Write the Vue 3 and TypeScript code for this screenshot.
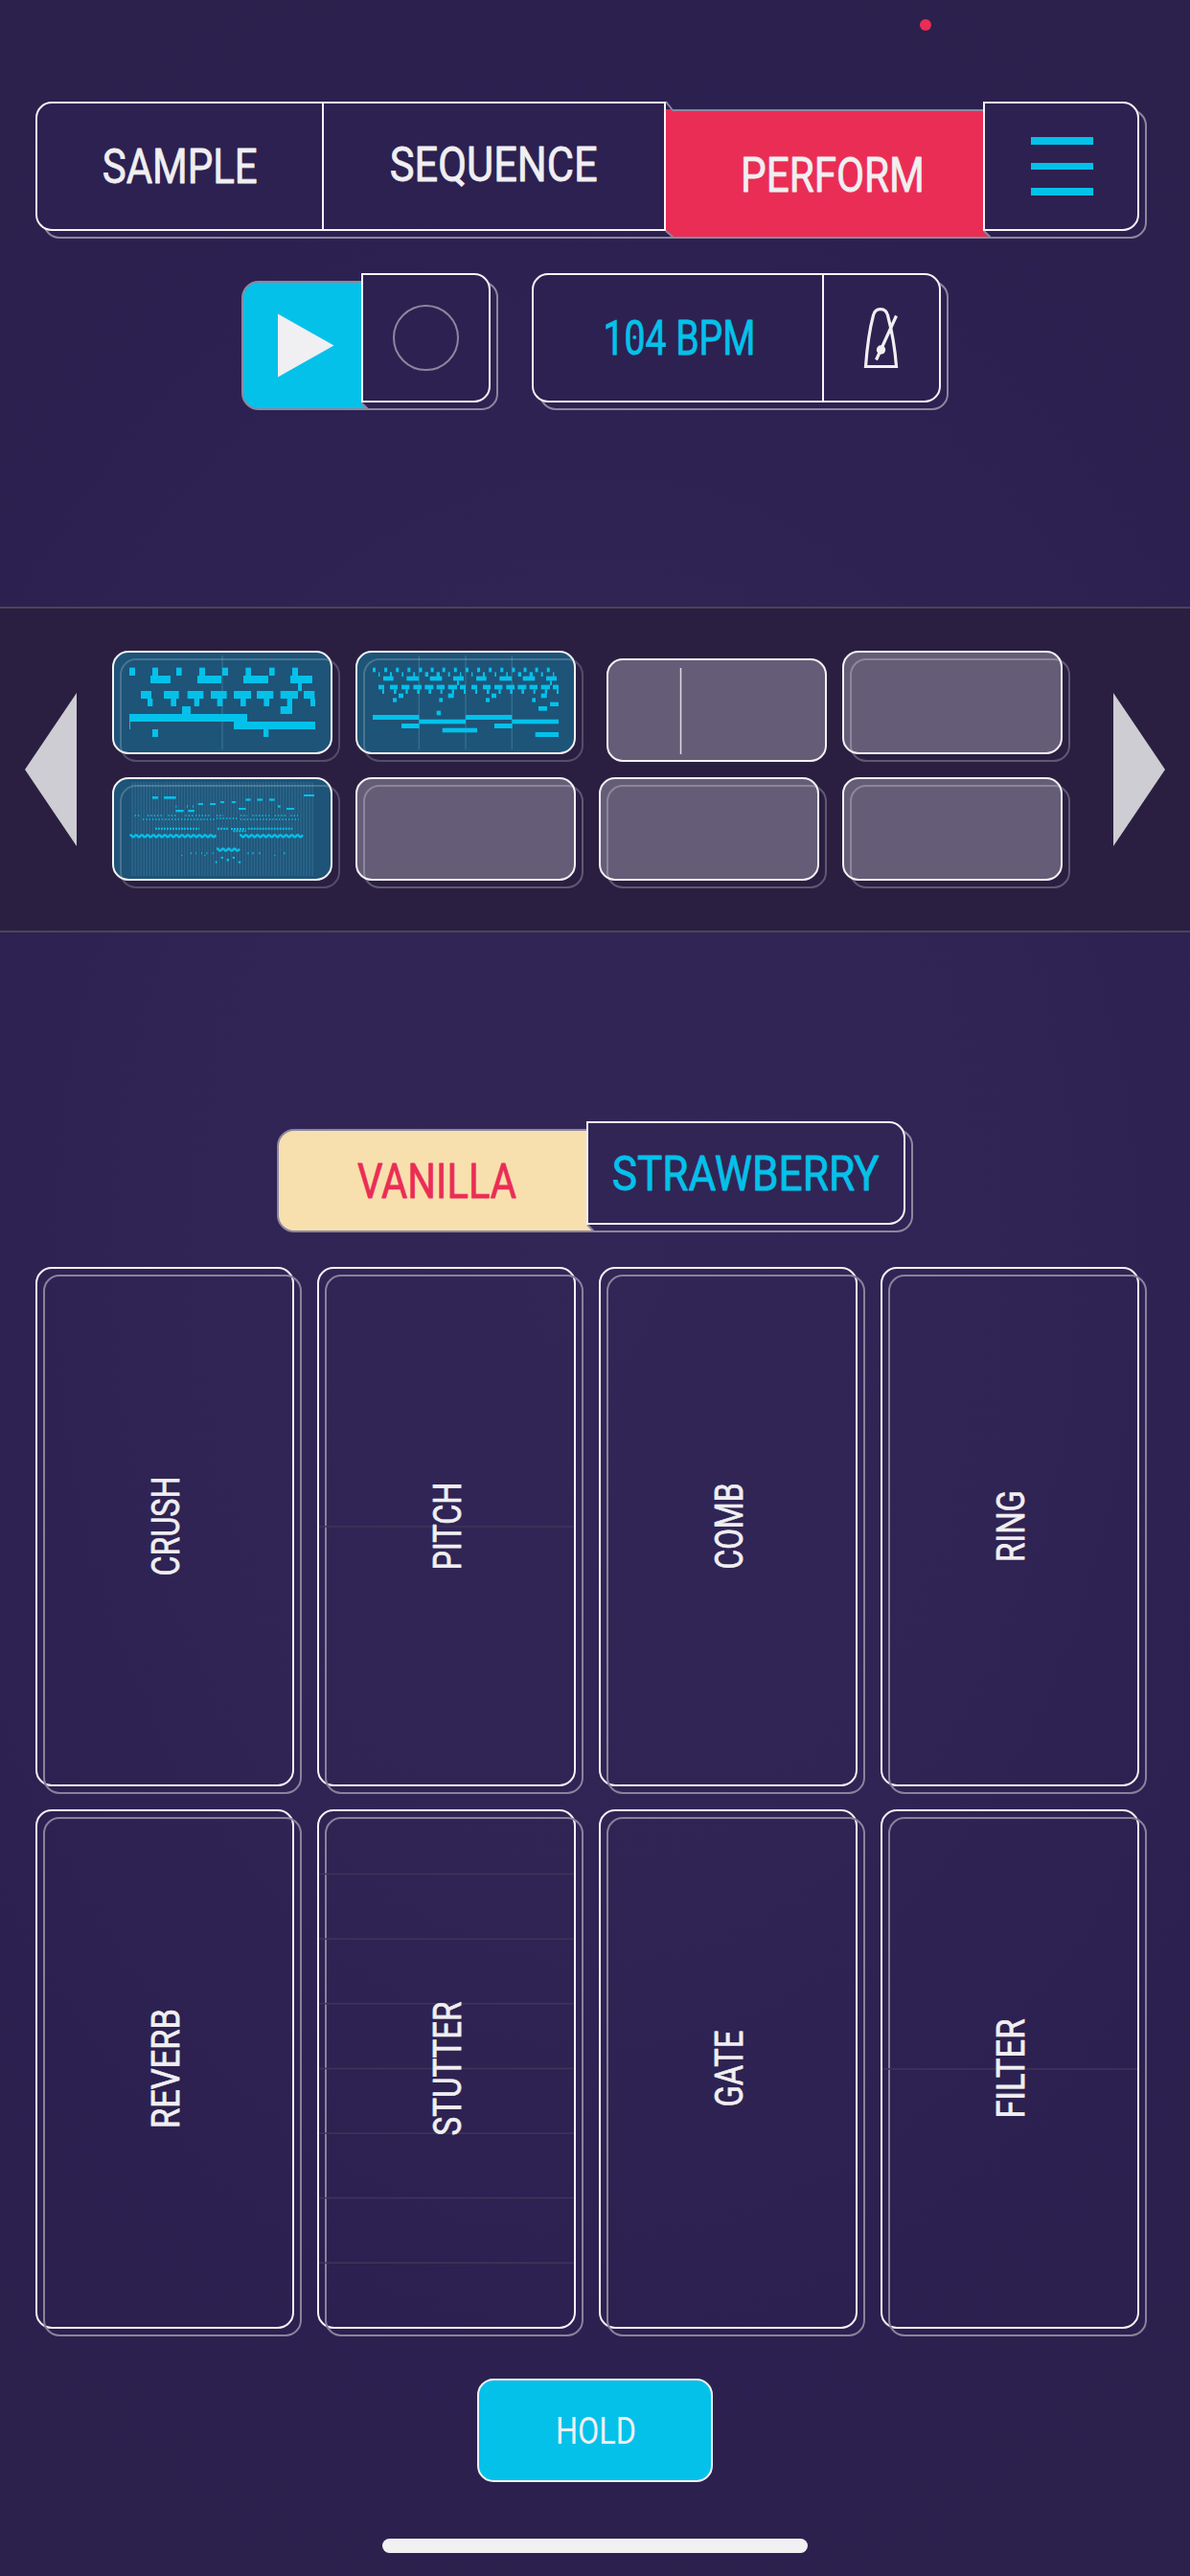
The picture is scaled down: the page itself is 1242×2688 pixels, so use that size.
<script setup lang="ts">
type Note = [x: number, y: number, w: number, h: number]

interface Clip {
  id: number
  kind: 'notes' | 'empty' | 'playing'
  box?: string
  bars?: number[]
  notes?: Note[]
  dense?: boolean
}

interface Pad {
  name: string
  length: number
  guides: number[]
}

const row = (y: number, h: number, cells: [number, number][]): Note[] =>
  cells.map(([x, w]) => [x, y, w, h])

const beatNotes: Note[] = [
  ...row(110, 25, [[105, 18], [177, 18], [252, 17], [324, 18], [396, 18], [469, 17], [543, 17], [615, 18]]),
  ...row(135, 24, [[171, 63], [318, 75], [462, 78], [609, 69]]),
  ...row(159, 24, [[633, 12]]),
  ...row(183, 24, [[141, 33], [213, 47], [287, 50], [360, 50], [432, 54], [504, 52], [578, 55], [651, 34]]),
  ...row(207, 24, [[162, 16], [235, 17], [308, 16], [380, 17], [453, 17], [526, 17], [599, 16], [672, 15]]),
  ...row(231, 24, [[270, 27], [578, 37]]),
  ...row(255, 24, [[105, 369]]),
  ...row(279, 24, [[105, 3], [432, 255]]),
  ...row(303, 24, [[177, 18], [525, 16]]),
]

const repeat = (cells: [number, number][]): [number, number][] => [
  ...cells,
  ...cells.map(([x, w]): [number, number] => [x + 291, w]),
]

const grooveNotes: Note[] = [
  ...row(110, 14, Array.from({ length: 16 }, (_, k): [number, number] => [87 + k * 36.35, 9])),
  ...row(124, 14, repeat([[105, 4], [141, 6], [178, 5], [214, 5], [251, 10], [287, 10], [323, 6], [360, 4]])),
  ...row(137, 14, repeat([[120, 32], [193, 38], [266, 38], [339, 33]])),
  ...row(151, 14, repeat([[351, 6]])),
  ...row(164, 14, repeat([[105, 18], [141, 24], [177, 25], [214, 26], [250, 27], [287, 25], [323, 28], [360, 18]])),
  ...row(178, 14, repeat([[117, 6], [153, 8], [190, 7], [226, 8], [262, 8], [299, 6], [335, 7], [372, 6]])),
  ...row(191, 14, repeat([[168, 15], [323, 18]])),
  ...row(205, 13, repeat([[150, 12], [295, 11]])),
  ...row(218, 13, [[642, 27]]),
  ...row(231, 14, [[606, 27]]),
  ...row(245, 14, [[287, 13]]),
  ...row(258, 15, [[87, 145], [378, 145]]),
  ...row(272, 14, [[232, 146], [523, 146]]),
  ...row(285, 15, repeat([[177, 56]])),
  ...row(299, 14, [[305, 109]]),
  ...row(312, 15, [[596, 73]]),
]

const songNotes: Note[] = [
  ...row(507, 6, [[651, 33]]),
  ...row(513, 8, [[177, 18], [213, 38]]),
  ...row(520, 7, [[469, 16], [505, 17], [543, 17]]),
  ...row(528, 6, [[390, 12], [426, 12]]),
  ...row(534, 6, [[320, 16], [357, 18]]),
  ...row(541, 7, [[570, 8], [285, 3], [303, 3], [250, 3]]),
  ...row(549, 6, [[447, 23], [597, 24]]),
  ...row(555, 7, [[250, 25], [289, 20]]),
  ...row(688, 6, [[297, 3], [312, 3], [330, 3], [346, 3], [365, 3], [475, 4], [490, 4], [511, 4], [588, 4]]),
  ...row(696, 3, [[267, 4], [339, 4], [558, 4]]),
  ...row(702, 6, [[392, 7], [428, 7]]),
  ...row(708, 8, [[410, 7]]),
  ...row(716, 6, [[374, 6], [446, 8]]),
]

// Arpeggio line: alternating high and low steps between two x positions.
const zigzag = (from: number, to: number, y: number): string => {
  let d = `M${from} ${y}`
  for (let x = from; x + 18 <= to + 2; x += 18.1) {
    d += ` h4 l5 6 h4 l5 -6`
  }
  return d
}

const clips: Clip[] = [
  { id: 1, kind: 'notes', box: '51 57 690 324', bars: [396], notes: beatNotes },
  { id: 2, kind: 'notes', box: '33 57 690 324', bars: [232, 378, 523], notes: grooveNotes },
  { id: 3, kind: 'playing' },
  { id: 4, kind: 'empty' },
  { id: 5, kind: 'notes', box: '51 453 690 324', notes: songNotes, dense: true },
  { id: 6, kind: 'empty' },
  { id: 7, kind: 'empty' },
  { id: 8, kind: 'empty' },
]

const pads: Pad[] = [
  { name: 'CRUSH', length: 104, guides: [] },
  { name: 'PITCH', length: 92, guides: [271] },
  { name: 'COMB', length: 90, guides: [] },
  { name: 'RING', length: 75, guides: [] },
  { name: 'REVERB', length: 125, guides: [] },
  { name: 'STUTTER', length: 140, guides: [1, 2, 3, 4, 5, 6, 7].map((n) => n * 67.6) },
  { name: 'GATE', length: 80, guides: [] },
  { name: 'FILTER', length: 104, guides: [271] },
]
</script>

<template>
  <main class="screen">
    <header class="status"><i class="rec-dot"></i></header>

    <nav class="group tabs">
      <i class="shadow"></i>
      <button class="seg first tab-sample">
        <svg class="label"><text x="50.4%" y="85" textLength="162" lengthAdjust="spacingAndGlyphs">SAMPLE</text></svg>
      </button>
      <button class="seg tab-sequence">
        <svg class="label"><text x="50.2%" y="82.5" textLength="217" lengthAdjust="spacingAndGlyphs">SEQUENCE</text></svg>
      </button>
      <button class="pressed tab-perform">
        <svg class="plate" width="340" height="143">
          <path d="M0 8H332V135L340 143H8L0 135Z" fill="#ea2d55" />
          <path class="edge" d="M0 0L7 9H332M0 135L8 142H340M332 135L339 142" />
        </svg>
        <svg class="label"><text x="174" y="93.5" textLength="192" lengthAdjust="spacingAndGlyphs">PERFORM</text></svg>
      </button>
      <button class="seg last tab-menu" aria-label="Menu">
        <i class="bar"></i><i class="bar"></i><i class="bar"></i>
      </button>
    </nav>

    <section class="transport">
      <div class="group deck">
        <i class="shadow"></i>
        <button class="pressed deck-play" aria-label="Play">
          <svg class="plate" width="133" height="143">
            <path d="M125 9H18A17 17 0 0 0 1 26V125A17 17 0 0 0 18 142H132L125 135Z" fill="#04c1ea" />
            <path class="edge" d="M125 9H18A17 17 0 0 0 1 26V125A17 17 0 0 0 18 142H133M125 135L132 142" />
            <path d="M38 42.5L96.5 75.5L38 108.5Z" fill="#f0eff1" />
          </svg>
        </button>
        <button class="seg last deck-record" aria-label="Record"><i class="ring"></i></button>
      </div>
      <div class="group tempo">
        <i class="shadow"></i>
        <button class="seg first tempo-value">
          <svg class="label cyan">
            <text x="153" y="84.5" textLength="159" lengthAdjust="spacingAndGlyphs">104 BPM</text>
            <circle cx="106.3" cy="67" r="2" />
          </svg>
        </button>
        <button class="seg last tempo-click" aria-label="Metronome">
          <svg width="40" height="70" viewBox="0 0 40 70" fill="none" stroke="#f0eff1" stroke-width="3.2">
            <path d="M3.5 64.500C5 44 8 24 11.500 11C13.500 2.500 24.500 2.500 26.500 11C30 24 34 44 35.500 64.500Z" />
            <path d="M14.500 57.500L35.500 11.500" />
            <circle cx="19.500" cy="47" r="4.700" fill="#f0eff1" stroke="none" />
          </svg>
        </button>
      </div>
    </section>

    <section class="band">
      <svg class="arrow" width="54" height="160"><path d="M54 0V160L0 80Z" /></svg>
      <div class="clips">
        <div v-for="clip in clips" :key="clip.id" class="clip" :class="clip.kind">
          <svg v-if="clip.kind === 'notes'" class="roll" :viewBox="clip.box" preserveAspectRatio="none">
            <template v-if="clip.dense">
              <path class="strips" d="M112 615H683" />
              <path class="ticks" d="M122 573H138M162 573H213M226 573H250M280 573H305M312 573H360M378 573H400M453 573H475M490 573H550M560 573H600M610 573H633" />
              <path class="ticks" d="M147 585H375M378 582H445M453 585H635" />
              <path class="ticks tight" d="M186 614H324M381 614H415M423 615H470M476 614H616M430 622H470" />
              <path class="zig" :d="zigzag(106, 376, 634)" />
              <path class="zig" :d="zigzag(450, 650, 634)" />
              <path class="zig" :d="zigzag(378, 450, 677)" />
            </template>
            <path v-for="b in clip.bars" :key="'b' + b" class="barline" :d="`M${b} 72V366`" />
            <rect v-for="(n, i) in clip.notes" :key="i" :x="n[0]" :y="n[1]" :width="n[2]" :height="n[3]" />
          </svg>
          <svg v-else-if="clip.kind === 'playing'" class="roll"><path class="playhead" d="M77.5 10V100" /></svg>
        </div>
      </div>
      <svg class="arrow" width="54" height="160"><path d="M0 0V160L54 80Z" /></svg>
    </section>

    <section class="group flavour">
      <i class="shadow"></i>
      <button class="pressed flavour-a">
        <svg class="plate" width="332" height="116">
          <path d="M324 9H18A17 17 0 0 0 1 26V98A17 17 0 0 0 18 115H331L324 108Z" fill="#f7e0ae" />
          <path class="edge" d="M324 9H18A17 17 0 0 0 1 26V98A17 17 0 0 0 18 115H332M324 108L331 115" />
        </svg>
        <svg class="label red"><text x="167" y="79.5" textLength="166" lengthAdjust="spacingAndGlyphs">VANILLA</text></svg>
      </button>
      <button class="seg last flavour-b">
        <svg class="label cyan"><text x="50.2%" y="71.5" textLength="279" lengthAdjust="spacingAndGlyphs">STRAWBERRY</text></svg>
      </button>
    </section>

    <section class="pads">
      <button v-for="pad in pads" :key="pad.name" class="pad">
        <svg width="270" height="542">
          <path v-for="g in pad.guides" :key="g" class="guide" :d="`M2 ${g}H268`" />
          <text transform="translate(149.5 270.5) rotate(-90)" :textLength="pad.length" lengthAdjust="spacingAndGlyphs">{{ pad.name }}</text>
        </svg>
      </button>
    </section>

    <button class="hold">
      <svg><text x="50.4%" y="68" textLength="84" lengthAdjust="spacingAndGlyphs">HOLD</text></svg>
    </button>
    <i class="home"></i>
  </main>
</template>

<style>
body {
  margin: 0;
  background: #2c2050;
}
</style>

<style scoped>
* {
  box-sizing: border-box;
}

.screen {
  width: 1242px;
  height: 2688px;
  overflow: hidden;
  display: flex;
  flex-direction: column;
  align-items: center;
  background: radial-gradient(ellipse 1000px 1450px at 50% 49%, #322657 0%, #302454 45%, #2c2050 80%, #2c204d 100%);
  font-family: Roboto, "Liberation Sans", sans-serif;
}

button {
  appearance: none;
  margin: 0;
  padding: 0;
  border: 0;
  background: none;
  font: inherit;
}

svg {
  display: block;
  overflow: visible;
}

text {
  font-size: 50.5px;
  text-anchor: middle;
  fill: #f0eff1;
  stroke: #f0eff1;
  stroke-width: 0.8px;
  stroke-linejoin: round;
}

.cyan text {
  fill: #04c1ea;
  stroke: #04c1ea;
}

.cyan circle {
  fill: #04c1ea;
}

.red text {
  fill: #ea2d55;
  stroke: #ea2d55;
}

.status {
  width: 100%;
  height: 106px;
  padding: 20px 270px 0 0;
  display: flex;
  justify-content: flex-end;
}

.rec-dot {
  width: 12px;
  height: 12px;
  border-radius: 50%;
  background: #ea2d55;
}

.group {
  position: relative;
  display: flex;
  height: 135px;
  flex: none;
}

.shadow {
  position: absolute;
  inset: 8px -8px -8px 8px;
  border: 2px solid #8d869f;
  border-radius: 17px;
}

.seg {
  position: relative;
  z-index: 1;
  display: flex;
  align-items: flex-start;
  border: 2px solid #f5f4f6;
  border-right-width: 0;
  background: #2d2151;
}

.first {
  border-radius: 17px 0 0 17px;
}

.last {
  border-right-width: 2px;
  border-radius: 0 17px 17px 0;
}

.label {
  width: 100%;
  height: 100%;
}

.seg .label {
  margin: -2px 0 0 -1px;
  height: 131px;
}

.pressed {
  position: relative;
}

.pressed .label {
  position: relative;
}

.plate {
  position: absolute;
  top: 0;
  left: 0;
}

.edge {
  fill: none;
  stroke: #8d869f;
  stroke-width: 2;
}

.tabs {
  width: 1152px;
  margin-right: 16px;
}

.tab-sample {
  width: 299px;
}

.tab-sequence {
  width: 359px;
  border-right-width: 2px;
}

.tab-perform {
  width: 331px;
}

.tab-menu {
  width: 163px;
  padding-left: 1px;
  flex-direction: column;
  align-items: center;
  justify-content: center;
  gap: 19px;
}

.bar {
  width: 65px;
  height: 7.5px;
  background: #04c1ea;
}

.transport {
  display: flex;
  gap: 43px;
  margin: 44px 8px 0 0;
  height: 135px;
}

.deck-play {
  width: 125px;
}

.deck-record {
  width: 135px;
  align-items: center;
  justify-content: center;
}

.ring {
  width: 69px;
  height: 69px;
  border: 2px solid #8d869f;
  border-radius: 50%;
}

.tempo-value {
  width: 303px;
}

.tempo-click {
  width: 124px;
  align-items: center;
  justify-content: center;
}

.band {
  width: 100%;
  height: 340px;
  margin-top: 213px;
  padding: 44px 26px 0;
  display: flex;
  justify-content: space-between;
  border: solid #4a4556;
  border-width: 2px 0;
  background: #2a1f41;
}

.arrow {
  margin-top: 44px;
  fill: #cecdd3;
}

.clips {
  display: grid;
  grid-template-columns: repeat(4, 230px);
  grid-auto-rows: 108px;
  gap: 24px;
  margin-right: 16px;
}

.clip {
  position: relative;
  border: 2px solid #f3f2f4;
  border-radius: 17px;
  background: #655d78;
}

.clip::after {
  content: "";
  position: absolute;
  inset: 6px -10px -10px 6px;
  border: 2px solid rgba(255, 255, 255, 0.26);
  border-radius: 17px;
}

.clip.notes {
  background: #1d5478;
}

.clip.notes::after {
  border-color: rgba(190, 200, 210, 0.28);
}

.clip.playing {
  transform: translate(8px, 8px);
}

.clip.playing::after {
  display: none;
}

.roll {
  width: 230px;
  height: 108px;
  margin: -2px 0 0 -2px;
  fill: #04c1ea;
}

.barline {
  stroke: #35708f;
  stroke-width: 4;
}

.strips {
  stroke: #2c668a;
  stroke-width: 294;
  stroke-dasharray: 4.6 4.5;
}

.ticks {
  stroke: #04c1ea;
  stroke-width: 4;
  stroke-dasharray: 4 6;
}

.tight {
  stroke-width: 6;
  stroke-dasharray: 6 3;
}

.zig {
  fill: none;
  stroke: #04c1ea;
  stroke-width: 7;
}

.playhead {
  stroke: #dddbe0;
  stroke-width: 1.5;
}

.flavour {
  height: 108px;
  margin: 197px 8px 0 0;
}

.flavour-a {
  width: 323px;
}

.flavour-b {
  width: 333px;
}

.flavour .seg {
  background: #312555;
}

.flavour .seg .label {
  height: 104px;
}

.pads {
  display: grid;
  grid-template-columns: repeat(4, 270px);
  grid-auto-rows: 542px;
  gap: 24px;
  margin: 44px 16px 0 0;
}

.pad {
  position: relative;
  isolation: isolate;
  border: 2px solid #f5f4f6;
  border-radius: 17px;
}

.pad::before {
  content: "";
  position: absolute;
  inset: 6px -10px -10px 6px;
  border: 2px solid #8a829c;
  border-radius: 17px;
  z-index: -1;
}

.pad svg {
  margin: -2px 0 0 -2px;
}

.pad text {
  font-size: 40.5px;
  stroke-width: 0.7px;
}

.guide {
  stroke: #3f3559;
  stroke-width: 1.5;
}

.hold {
  width: 246px;
  height: 108px;
  margin-top: 52px;
  border: 2px solid #f0eff1;
  border-radius: 17px;
  background: #04c1ea;
}

.hold svg {
  width: 242px;
  height: 108px;
  margin-top: -2px;
}

.hold text {
  font-size: 39.5px;
  stroke: none;
}

.home {
  width: 444px;
  height: 15px;
  margin-top: 59px;
  border-radius: 8px;
  background: #f0eff1;
}
</style>
